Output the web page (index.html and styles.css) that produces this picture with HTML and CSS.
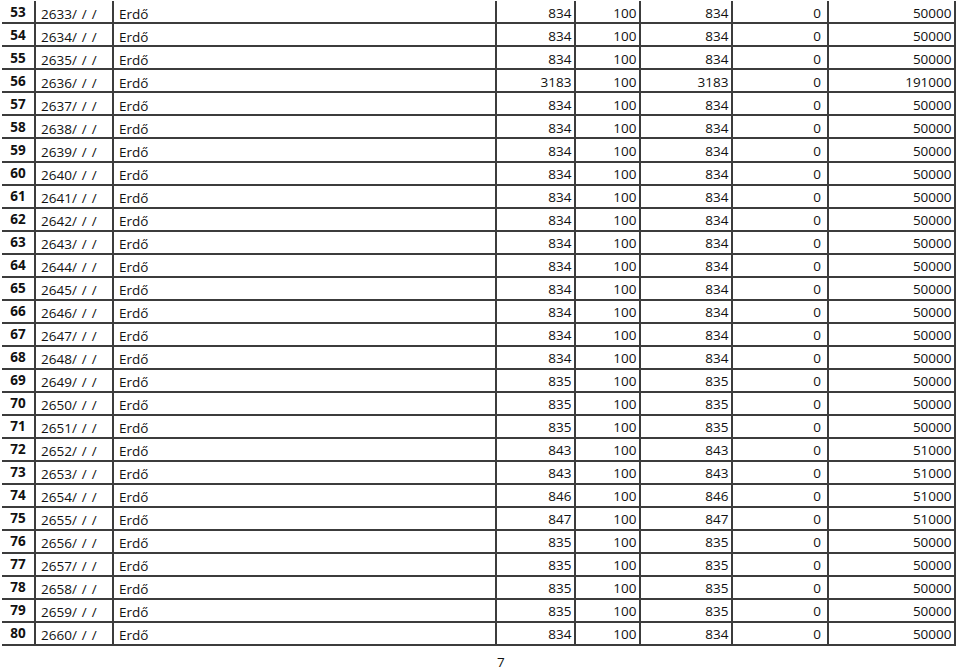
FILE: index.html
```html
<!DOCTYPE html>
<html lang="hu">
<head>
<meta charset="utf-8">
<title>Erdő táblázat</title>
<link rel="stylesheet" href="styles.css">
</head>
<body>
<div class="sheet">
<div class="row"><span class="c num">53</span><span class="c id">2633/ / /</span><span class="c name">Erdő</span><span class="c val">834</span><span class="c val">100</span><span class="c val">834</span><span class="c val zero">0</span><span class="c val">50000</span></div>
<div class="row"><span class="c num">54</span><span class="c id">2634/ / /</span><span class="c name">Erdő</span><span class="c val">834</span><span class="c val">100</span><span class="c val">834</span><span class="c val zero">0</span><span class="c val">50000</span></div>
<div class="row"><span class="c num">55</span><span class="c id">2635/ / /</span><span class="c name">Erdő</span><span class="c val">834</span><span class="c val">100</span><span class="c val">834</span><span class="c val zero">0</span><span class="c val">50000</span></div>
<div class="row"><span class="c num">56</span><span class="c id">2636/ / /</span><span class="c name">Erdő</span><span class="c val">3183</span><span class="c val">100</span><span class="c val">3183</span><span class="c val zero">0</span><span class="c val">191000</span></div>
<div class="row"><span class="c num">57</span><span class="c id">2637/ / /</span><span class="c name">Erdő</span><span class="c val">834</span><span class="c val">100</span><span class="c val">834</span><span class="c val zero">0</span><span class="c val">50000</span></div>
<div class="row"><span class="c num">58</span><span class="c id">2638/ / /</span><span class="c name">Erdő</span><span class="c val">834</span><span class="c val">100</span><span class="c val">834</span><span class="c val zero">0</span><span class="c val">50000</span></div>
<div class="row"><span class="c num">59</span><span class="c id">2639/ / /</span><span class="c name">Erdő</span><span class="c val">834</span><span class="c val">100</span><span class="c val">834</span><span class="c val zero">0</span><span class="c val">50000</span></div>
<div class="row"><span class="c num">60</span><span class="c id">2640/ / /</span><span class="c name">Erdő</span><span class="c val">834</span><span class="c val">100</span><span class="c val">834</span><span class="c val zero">0</span><span class="c val">50000</span></div>
<div class="row"><span class="c num">61</span><span class="c id">2641/ / /</span><span class="c name">Erdő</span><span class="c val">834</span><span class="c val">100</span><span class="c val">834</span><span class="c val zero">0</span><span class="c val">50000</span></div>
<div class="row"><span class="c num">62</span><span class="c id">2642/ / /</span><span class="c name">Erdő</span><span class="c val">834</span><span class="c val">100</span><span class="c val">834</span><span class="c val zero">0</span><span class="c val">50000</span></div>
<div class="row"><span class="c num">63</span><span class="c id">2643/ / /</span><span class="c name">Erdő</span><span class="c val">834</span><span class="c val">100</span><span class="c val">834</span><span class="c val zero">0</span><span class="c val">50000</span></div>
<div class="row"><span class="c num">64</span><span class="c id">2644/ / /</span><span class="c name">Erdő</span><span class="c val">834</span><span class="c val">100</span><span class="c val">834</span><span class="c val zero">0</span><span class="c val">50000</span></div>
<div class="row"><span class="c num">65</span><span class="c id">2645/ / /</span><span class="c name">Erdő</span><span class="c val">834</span><span class="c val">100</span><span class="c val">834</span><span class="c val zero">0</span><span class="c val">50000</span></div>
<div class="row"><span class="c num">66</span><span class="c id">2646/ / /</span><span class="c name">Erdő</span><span class="c val">834</span><span class="c val">100</span><span class="c val">834</span><span class="c val zero">0</span><span class="c val">50000</span></div>
<div class="row"><span class="c num">67</span><span class="c id">2647/ / /</span><span class="c name">Erdő</span><span class="c val">834</span><span class="c val">100</span><span class="c val">834</span><span class="c val zero">0</span><span class="c val">50000</span></div>
<div class="row"><span class="c num">68</span><span class="c id">2648/ / /</span><span class="c name">Erdő</span><span class="c val">834</span><span class="c val">100</span><span class="c val">834</span><span class="c val zero">0</span><span class="c val">50000</span></div>
<div class="row"><span class="c num">69</span><span class="c id">2649/ / /</span><span class="c name">Erdő</span><span class="c val">835</span><span class="c val">100</span><span class="c val">835</span><span class="c val zero">0</span><span class="c val">50000</span></div>
<div class="row"><span class="c num">70</span><span class="c id">2650/ / /</span><span class="c name">Erdő</span><span class="c val">835</span><span class="c val">100</span><span class="c val">835</span><span class="c val zero">0</span><span class="c val">50000</span></div>
<div class="row"><span class="c num">71</span><span class="c id">2651/ / /</span><span class="c name">Erdő</span><span class="c val">835</span><span class="c val">100</span><span class="c val">835</span><span class="c val zero">0</span><span class="c val">50000</span></div>
<div class="row"><span class="c num">72</span><span class="c id">2652/ / /</span><span class="c name">Erdő</span><span class="c val">843</span><span class="c val">100</span><span class="c val">843</span><span class="c val zero">0</span><span class="c val">51000</span></div>
<div class="row"><span class="c num">73</span><span class="c id">2653/ / /</span><span class="c name">Erdő</span><span class="c val">843</span><span class="c val">100</span><span class="c val">843</span><span class="c val zero">0</span><span class="c val">51000</span></div>
<div class="row"><span class="c num">74</span><span class="c id">2654/ / /</span><span class="c name">Erdő</span><span class="c val">846</span><span class="c val">100</span><span class="c val">846</span><span class="c val zero">0</span><span class="c val">51000</span></div>
<div class="row"><span class="c num">75</span><span class="c id">2655/ / /</span><span class="c name">Erdő</span><span class="c val">847</span><span class="c val">100</span><span class="c val">847</span><span class="c val zero">0</span><span class="c val">51000</span></div>
<div class="row"><span class="c num">76</span><span class="c id">2656/ / /</span><span class="c name">Erdő</span><span class="c val">835</span><span class="c val">100</span><span class="c val">835</span><span class="c val zero">0</span><span class="c val">50000</span></div>
<div class="row"><span class="c num">77</span><span class="c id">2657/ / /</span><span class="c name">Erdő</span><span class="c val">835</span><span class="c val">100</span><span class="c val">835</span><span class="c val zero">0</span><span class="c val">50000</span></div>
<div class="row"><span class="c num">78</span><span class="c id">2658/ / /</span><span class="c name">Erdő</span><span class="c val">835</span><span class="c val">100</span><span class="c val">835</span><span class="c val zero">0</span><span class="c val">50000</span></div>
<div class="row"><span class="c num">79</span><span class="c id">2659/ / /</span><span class="c name">Erdő</span><span class="c val">835</span><span class="c val">100</span><span class="c val">835</span><span class="c val zero">0</span><span class="c val">50000</span></div>
<div class="row"><span class="c num">80</span><span class="c id">2660/ / /</span><span class="c name">Erdő</span><span class="c val">834</span><span class="c val">100</span><span class="c val">834</span><span class="c val zero">0</span><span class="c val">50000</span></div>
</div>
<div class="page-no">7</div>
</body>
</html>
```

FILE: styles.css
```css
* {
  box-sizing: border-box;
}

body {
  margin: 0;
  background: #ffffff;
  color: #111111;
  font-family: "Open Sans", "Noto Sans", "Liberation Sans", sans-serif;
  font-size: 13.5px;
  font-weight: 500;
  line-height: 16px;
}

.sheet {
  margin: 1.4px 0 0 2px;
  width: 954px;
}

.row {
  display: grid;
  grid-template-columns: 34px 78px 383px 79px 65px 92px 96px 127px;
  height: 23.02px;
  border-bottom: 2px solid #3c3c3c;
}

.c {
  border-right: 2px solid #3c3c3c;
  padding-top: 3.6px;
  white-space: nowrap;
  overflow: hidden;
}

.num {
  font-weight: 700;
  text-align: center;
  padding-top: 2.3px;
}

.id {
  padding-left: 5px;
  padding-top: 4.3px;
  word-spacing: 1.5px;
}

.name {
  padding-left: 5px;
  padding-top: 4.3px;
}

.val {
  text-align: right;
  padding-right: 2.5px;
}

.val.zero {
  padding-right: 6px;
}

.page-no {
  margin-top: 8.4px;
  padding-left: 497px;
}
```
